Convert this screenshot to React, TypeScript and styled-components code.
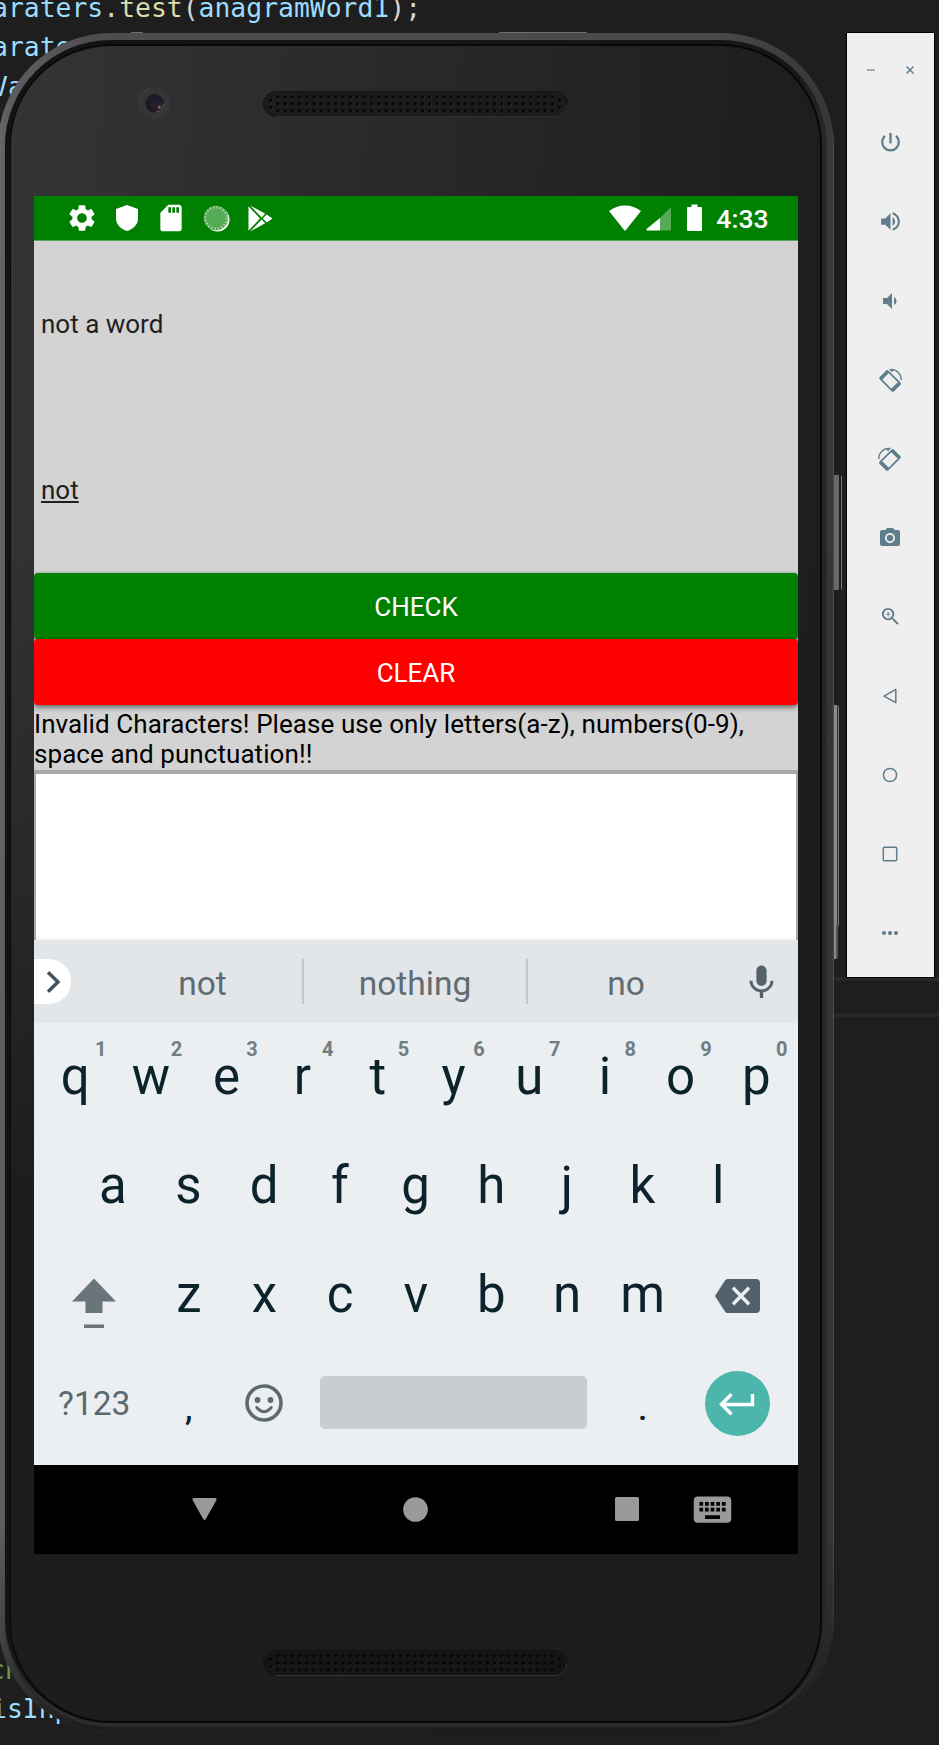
import React from 'react';
import styled, { createGlobalStyle } from 'styled-components';
import {
  MdSettings,
  MdSdCard,
  MdMic,
  MdVolumeUp,
  MdVolumeDown,
  MdPhotoCamera,
  MdZoomIn,
  MdKeyboard,
} from 'react-icons/md';

const GlobalStyle = createGlobalStyle`
  *, *::before, *::after { box-sizing: border-box; }
  html, body { margin: 0; padding: 0; background: #1e1e1e; }
  body { font-family: Roboto, "Liberation Sans", sans-serif; overflow: hidden; }
  svg { display: block; }
`;

const Desktop = styled.main`
  position: relative;
  width: 939px;
  height: 1745px;
  overflow: hidden;
  background: #1e1e1e;
`;

/* ---------- editor behind the emulator ---------- */

const Editor = styled.div`
  display: flex;
  flex-direction: column;
  margin-top: -12.5px;
`;

const CodeLine = styled.div<{ $active?: boolean; $shift?: number }>`
  flex: none;
  height: 39.58px;
  text-indent: ${(p) => p.$shift ?? -8}px;
  white-space: pre;
  font: 26.4px/39.58px "DejaVu Sans Mono", monospace;
  color: #9cdcfe;
  ${(p) => (p.$active ? 'border: 4px solid #282828; border-width: 4px 0;' : '')}
`;

const Fn = styled.span`
  color: #dcdcaa;
`;
const Punct = styled.span`
  color: #d4d4d4;
`;
const Comment = styled.span`
  color: #6a9955;
`;

/* ---------- phone hardware ---------- */

const Hardware = styled.div<{ $x: number; $y: number; $w: number; $h: number; $tone: string }>`
  position: absolute;
  left: ${(p) => p.$x}px;
  top: ${(p) => p.$y}px;
  width: ${(p) => p.$w}px;
  height: ${(p) => p.$h}px;
  background: ${(p) => p.$tone};
  border-radius: 0 2px 2px 0;
`;

const Frame = styled.section`
  position: absolute;
  left: -2px;
  top: 33px;
  width: 836px;
  height: 1699px;
  padding: 7px 7px 5px;
  border-radius: 113px;
  background: linear-gradient(90deg, #6b696b 0, #605e60 1%, #4e4c4e 12%, #4b494b 85%, #3a3738 98%, #3a3738 99.8%, #555 100%);
  &::before {
    content: '';
    position: absolute;
    inset: 0;
    border-radius: inherit;
    background: linear-gradient(180deg, rgba(20, 20, 20, 0) 0, rgba(20, 20, 20, 0.1) 88%, rgba(20, 20, 20, 0.5) 96%, rgba(20, 20, 20, 0.85) 100%);
  }
`;

const Bezel = styled.div`
  position: relative;
  height: 100%;
  padding: 4px 5px 4px 5px;
  border-radius: 106px;
  background: linear-gradient(90deg, #131313 0, #171717 96%, #2a292a 100%);
  box-shadow: inset 0 -4px 0 #2d2c2d;
`;

const Glass = styled.div`
  display: flex;
  flex-direction: column;
  align-items: flex-start;
  height: 100%;
  border: 2px solid #080808;
  border-left-width: 1px;
  border-radius: 101px;
  padding-left: 23px;
  background: linear-gradient(90deg, rgba(28, 28, 29, 0), rgba(28, 28, 29, 0.95)),
    linear-gradient(180deg, #343436 0, #333335 28%, #282829 50%, #1d1d1e 68%, #1d1d1e 100%);
`;

const Forehead = styled.div`
  display: flex;
  align-items: flex-start;
  width: 764px;
  height: 150px;
  padding: 41px 0 0 104px;
`;

const Chin = styled.div`
  display: flex;
  width: 764px;
  padding: 96px 0 0 229px;
`;

const LensSlot = styled.div`
  width: 32px;
  height: 32px;
  margin-right: 93px;
`;

const GrilleSlot = styled.div`
  padding-top: 4px;
`;

function Lens() {
  return (
    <svg width="32" height="32" viewBox="0 0 32 32">
      <circle cx="16" cy="16" r="15.5" fill="#353537" stroke="#3a3a3c" />
      <circle cx="16.5" cy="16.3" r="9.3" fill="#1c1a23" />
      <circle cx="19" cy="18" r="6" fill="#241f2e" />
      <path d="M19 20.500l3-2.500 1 2-2 2z" fill="#8d5a5a" />
      <path d="M18 25a9 9 0 0 0 7.500-8" fill="none" stroke="#5c595c" />
    </svg>
  );
}

function Grille({ dark }: { dark?: boolean }) {
  const dots: React.ReactNode[] = [];
  const hole = (x: number, y: number) => (
    <g key={`${x}-${y}`}>
      <circle cx={x + 0.5} cy={y + 0.6} r="1.9" fill={dark ? '#242425' : '#303032'} />
      <circle cx={x} cy={y} r="1.8" fill="#070707" />
    </g>
  );
  for (let c = 0; c < 39; c++) for (const y of [6, 13, 20]) dots.push(hole(15 + c * 7.22, y));
  for (const x of [7.5, 296.5]) for (const y of [9.5, 16.5]) dots.push(hole(x, y));
  return (
    <svg width="305" height="26" viewBox="0 0 305 26">
      <rect x="0.5" y="0.5" width="304" height="25" rx="12.5" fill={dark ? '#151515' : '#1b1b1b'} stroke="#131313" />
      <path d="M12 25.5H292a12.5 12.5 0 0 0 12-12" fill="none" stroke={dark ? '#383838' : '#303031'} />
      {dots}
    </svg>
  );
}

/* ---------- phone screen ---------- */

const Screen = styled.div`
  display: flex;
  flex-direction: column;
  flex: none;
  width: 764px;
  height: 1358px;
  background: #d3d3d3;
  overflow: hidden;
`;

const StatusBar = styled.header`
  display: flex;
  justify-content: space-between;
  flex: none;
  height: 45px;
  padding: 0 29.5px 0 26px;
  background: #008000;
  border-bottom: 1px solid #55a955;
  color: #fff;
`;

const StatusGroup = styled.div`
  display: flex;
  align-items: center;
`;

const StatusIcon = styled.span`
  display: flex;
  justify-content: center;
  width: 44.6px;
`;

const Clock = styled.time`
  margin-left: 11.5px;
  padding-top: 3px;
  font-size: 26.5px;
  font-weight: 500;
  line-height: 1;
`;

const Field = styled.label<{ $composing?: boolean }>`
  display: flex;
  align-items: center;
  flex: none;
  height: 166px;
  padding-left: 7px;
  font-size: 26px;
  line-height: 30.5px;
  color: #1f1f1f;
  span {
    ${(p) => (p.$composing ? 'text-decoration: underline; text-decoration-thickness: 1.5px; text-underline-offset: 2px;' : '')}
  }
`;

const ActionButton = styled.button<{ $tone: string }>`
  flex: none;
  height: 66px;
  padding: 2px 0 0;
  border: 0;
  border-radius: 4px;
  background: ${(p) => p.$tone};
  box-shadow: 0 3px 5px rgba(0, 0, 0, 0.4), 0 0 3px rgba(0, 0, 0, 0.25);
  color: #fff;
  font: 26px/30px Roboto, sans-serif;
`;

const Message = styled.p`
  flex: none;
  position: relative;
  height: 61px;
  margin: 3.5px 0 0;
  font-size: 26px;
  line-height: 30.3px;
  letter-spacing: 0.065px;
  color: #000;
`;

const Output = styled.div`
  flex: 1;
  border: 2px solid #a9a9a9;
  border-top-width: 4px;
  border-bottom: 0;
  background: linear-gradient(0deg, #f4f4f4 0, #fff 4px);
`;

/* ---------- soft keyboard ---------- */

const Suggestions = styled.div`
  display: grid;
  grid-template-columns: 69px 201px 224px 198px 72px;
  align-items: center;
  flex: none;
  height: 83px;
  background: #e2e6e9;
  color: #5f6c73;
`;

const ExpandTab = styled.div`
  display: flex;
  align-items: center;
  width: 37px;
  height: 45px;
  padding-left: 12px;
  border-radius: 0 22px 22px 0;
  background: #fff;
`;

const Suggestion = styled.div<{ $divided?: boolean }>`
  height: 45px;
  border-right: 2px solid ${(p) => (p.$divided ? '#c3c8cb' : 'transparent')};
  text-align: center;
  font-size: 33.5px;
  line-height: 49px;
`;

const MicCell = styled.div`
  display: flex;
  justify-content: center;
  padding: 1px 2px 0 0;
  color: #54626a;
`;

const Keyboard = styled.div`
  flex: none;
  height: 442px;
  background: #ebeff2;
`;

const KeyRow = styled.div<{ $first?: boolean; $inset?: boolean }>`
  display: flex;
  height: ${(p) => (p.$first ? 106.5 : 109.5)}px;
  padding: 0 ${(p) => (p.$inset ? 42 : 4)}px ${(p) => (p.$first ? 2 : 0)}px ${(p) => (p.$inset ? 41 : 3.5)}px;
`;

const offsets = { letter: 3, mode: 1, punct: 11, shift: 18, backspace: 4, icon: 0 };

const Key = styled.div<{ $span?: number; $kind?: keyof typeof offsets }>`
  position: relative;
  display: flex;
  align-items: center;
  justify-content: center;
  flex: ${(p) => p.$span ?? 1} 1 0;
  padding-top: ${(p) => offsets[p.$kind ?? 'letter']}px;
  padding-bottom: ${(p) => (p.$kind === 'icon' ? 1.5 : 0)}px;
  font-size: ${(p) => (p.$kind ? 33.5 : 51)}px;
  font-weight: ${(p) => (p.$kind === 'punct' ? 500 : 400)};
  line-height: 1.172;
  color: ${(p) => (p.$kind === 'mode' || p.$kind === 'icon' ? '#5c696f' : '#0d232c')};
`;

const Hint = styled.span`
  position: absolute;
  left: 57.5px;
  top: 13.5px;
  font-size: 20px;
  font-weight: 700;
  line-height: 24px;
  color: #727d82;
`;

const SpaceBar = styled.div`
  flex: none;
  width: 267px;
  height: 53px;
  border-radius: 5px;
  background: #c9cdd0;
`;

const EnterKey = styled.div`
  display: flex;
  align-items: center;
  justify-content: center;
  width: 65px;
  height: 65px;
  border-radius: 50%;
  background: #4db6ac;
`;

const NavBar = styled.nav`
  display: grid;
  grid-template-columns: 65px 211px 211px 63px 86px 85px;
  align-items: center;
  justify-items: center;
  flex: none;
  height: 89px;
  padding-bottom: 1px;
  background: #000;
  color: #9a9a9a;
`;

/* ---------- emulator side panel ---------- */

const SidePanel = styled.aside`
  position: absolute;
  left: 846px;
  top: 32px;
  width: 89px;
  height: 946px;
  border: 1px solid #000;
  background: #efefef;
  color: #607d8b;
`;

const WindowControls = styled.div`
  display: flex;
  align-items: center;
  justify-content: space-between;
  height: 70px;
  padding: 4px 20px 0;
`;

const Tool = styled.div`
  display: flex;
  align-items: center;
  justify-content: center;
  height: 79px;
  padding-right: 1px;
`;

function PowerIcon() {
  return (
    <svg width="25" height="25" viewBox="0 0 25 25" fill="none" stroke="currentColor" strokeWidth="2.300">
      <path d="M12.500 3v10.500M7 5.900a8.300 8.300 0 1 0 11 0" />
    </svg>
  );
}

function RotateIcon({ mirrored }: { mirrored?: boolean }) {
  return (
    <svg width="24" height="24" viewBox="0 0 24 24" fill="none" stroke="currentColor" transform={mirrored ? 'scale(-1 1)' : undefined}>
      <g transform="rotate(45 12 12.7)">
        <rect x="3" y="7.4" width="18.4" height="10.800" rx="1" strokeWidth="1.7" />
        <path d="M4.200 7.600v10.400M20.200 7.600v10.400" strokeWidth="3.200" />
      </g>
      <path d="M12.5 1.4A10.300 10.300 0 0 1 23.300 12" strokeWidth="1.4" />
      <path d="M11 .8l5.500.6-2.800 2.9z" fill="currentColor" stroke="none" />
    </svg>
  );
}

const OutlineIcon = ({ children }: { children: React.ReactNode }) => (
  <svg width="24" height="24" viewBox="0 0 24 24" fill="none" stroke="currentColor" strokeWidth="1.5" strokeLinejoin="round">
    {children}
  </svg>
);

const tools: React.ReactNode[] = [
  <PowerIcon />,
  <MdVolumeUp size={25} />,
  <MdVolumeDown size={24} />,
  <RotateIcon />,
  <RotateIcon mirrored />,
  <MdPhotoCamera size={24} />,
  <MdZoomIn size={23} />,
  <OutlineIcon><path d="M17.8 5.3v13.4L6 12.2z" /></OutlineIcon>,
  <OutlineIcon><circle cx="12" cy="12" r="6.6" /></OutlineIcon>,
  <OutlineIcon><rect x="5.3" y="5.3" width="13.4" height="13.4" rx="1" /></OutlineIcon>,
  <svg width="18" height="6" viewBox="0 0 18 6" fill="currentColor">
    <circle cx="3" cy="3" r="2.1" /><circle cx="9" cy="3" r="2.1" /><circle cx="15" cy="3" r="2.1" />
  </svg>,
];

function SpinnerIcon() {
  return (
    <svg width="27" height="27" viewBox="0 0 27 27" fill="none">
      <circle cx="14.5" cy="14.5" r="12" fill="#fff" />
      <circle cx="13" cy="13" r="12.3" fill="#55aa55" />
      <circle cx="13" cy="13" r="10.8" stroke="#a5d2a5" strokeWidth="2.6" strokeDasharray="1.4 2" />
    </svg>
  );
}

function SmileIcon() {
  return (
    <svg width="38" height="38" viewBox="0 0 38 38" fill="none" stroke="currentColor">
      <circle cx="19" cy="19" r="17" strokeWidth="3.600" />
      <path d="M11.800 23.500Q19 32 26.200 23.500" strokeWidth="3" strokeLinecap="round" />
      <circle cx="12.500" cy="16" r="2.900" fill="currentColor" stroke="none" />
      <circle cx="25.500" cy="16" r="2.900" fill="currentColor" stroke="none" />
    </svg>
  );
}

const hints = '1234567890';

export default function App() {
  const blank = (n: number, from: number) => Array.from({ length: n }, (_, i) => <CodeLine key={from + i}> </CodeLine>);
  return (
    <Desktop>
      <GlobalStyle />
      <Editor>
        <CodeLine>
          araters<Punct>.</Punct><Fn>test</Fn><Punct>(</Punct>anagramWord1<Punct>);</Punct>
        </CodeLine>
        <CodeLine>arate</CodeLine>
        <CodeLine>Va</CodeLine>
        {blank(22, 3)}
        <CodeLine $active> </CodeLine>
        {blank(16, 26)}
        <CodeLine $shift={-11}><Comment>ch</Comment></CodeLine>
        <CodeLine $shift={-9}>isInp</CodeLine>
      </Editor>

      <Hardware $x={131} $y={32} $w={12} $h={2} $tone="#6e6e6e" />
      <Hardware $x={499} $y={32} $w={88} $h={2} $tone="#6e6e6e" />
      <Hardware $x={833} $y={475} $w={9} $h={115} $tone="linear-gradient(90deg,#6a676a 0 65%,#1c1c1c 65% 85%,#777 85%)" />
      <Hardware $x={833} $y={705} $w={6} $h={222} $tone="linear-gradient(90deg,#8b888b 0 65%,#333 65% 85%,#777 85%)" />
      <Hardware $x={833} $y={925} $w={5} $h={34} $tone="linear-gradient(90deg,#8b888b 0 65%,#555 65%)" />

      <Frame>
        <Bezel>
          <Glass>
            <Forehead>
              <LensSlot><Lens /></LensSlot>
              <GrilleSlot><Grille /></GrilleSlot>
            </Forehead>

            <Screen>
              <StatusBar>
                <StatusGroup>
                  <StatusIcon><MdSettings size={32} /></StatusIcon>
                  <StatusIcon>
                    <svg width="24" height="28" viewBox="0 0 24 28" fill="currentColor">
                      <path d="M12 1L23 5v9.500c0 6-4.600 10.500-11 12.500C5.600 25 1 20.500 1 14.500V5z" />
                    </svg>
                  </StatusIcon>
                  <StatusIcon><MdSdCard size={32} /></StatusIcon>
                  <StatusIcon><SpinnerIcon /></StatusIcon>
                  <StatusIcon>
                    <svg width="25" height="27" viewBox="0 0 25 27" fill="currentColor">
                      <path d="M.5 1.200L12 13.500.5 25.800zM2.200.4L17.200 8.800 13.600 12.500zM2.200 26.600L17.200 18.200 13.600 14.500zM18.600 9.600L24.500 13.500 18.600 17.400 14.800 13.500z" />
                    </svg>
                  </StatusIcon>
                </StatusGroup>
                <StatusGroup>
                  <svg width="32" height="28" viewBox="0 0 32 28" fill="currentColor">
                    <path d="M0 7C9-.5 23-.5 32 7L16.500 26.500q-.5.500-1 0z" />
                  </svg>
                  <svg width="35" height="28" viewBox="0 0 35 28" fill="currentColor">
                    <path d="M30 3v23.500H19V14z" opacity=".34" />
                    <path d="M19 14v12.500H6q-1-.5-.5-1.500z" />
                  </svg>
                  <svg width="29" height="28" viewBox="0 0 29 28" fill="currentColor">
                    <path d="M15.500.5h6v2.500H25q1 0 1 1v22q0 1-1 1H12q-1 0-1-1V4q0-1 1-1h3.500z" />
                  </svg>
                  <Clock>4:33</Clock>
                </StatusGroup>
              </StatusBar>

              <Field><span>not a word</span></Field>
              <Field $composing><span>not</span></Field>
              <ActionButton $tone="#008000">CHECK</ActionButton>
              <ActionButton $tone="#ff0000">CLEAR</ActionButton>
              <Message>
                Invalid Characters! Please use only letters(a-z), numbers(0-9),<br />space and punctuation!!
              </Message>
              <Output />

              <Suggestions>
                <ExpandTab>
                  <svg width="15" height="24" viewBox="0 0 15 24" fill="none" stroke="#43525a" strokeWidth="3.400">
                    <path d="M2 2.200L12 12 2 21.800" />
                  </svg>
                </ExpandTab>
                <Suggestion $divided>not</Suggestion>
                <Suggestion $divided>nothing</Suggestion>
                <Suggestion>no</Suggestion>
                <MicCell><MdMic size={41} /></MicCell>
              </Suggestions>

              <Keyboard>
                <KeyRow $first>
                  {'qwertyuiop'.split('').map((k, i) => (
                    <Key key={k}>{k}<Hint>{hints[i]}</Hint></Key>
                  ))}
                </KeyRow>
                <KeyRow $inset>
                  {'asdfghjkl'.split('').map((k) => <Key key={k}>{k}</Key>)}
                </KeyRow>
                <KeyRow>
                  <Key $span={1.5} $kind="shift">
                    <svg width="44" height="52" viewBox="0 0 44 52" fill="#69757b">
                      <path d="M22 1.500L44 24.500H30.500V36h-17V24.500H0zM12 47.500h20v3.500H12z" />
                    </svg>
                  </Key>
                  {'zxcvbnm'.split('').map((k) => <Key key={k}>{k}</Key>)}
                  <Key $span={1.5} $kind="backspace">
                    <svg width="45" height="34" viewBox="0 0 45 34">
                      <path d="M12.500 0H41q4 0 4 4v26q0 4-4 4H12.500q-1.500 0-2.500-1.500L0 17 10 1.500Q11 0 12.500 0z" fill="#51606a" />
                      <path d="M18 8.700L34 25.200M34 8.700L18 25.200" stroke="#ebeff2" strokeWidth="3.400" />
                    </svg>
                  </Key>
                </KeyRow>
                <KeyRow>
                  <Key $span={1.5} $kind="mode">?123</Key>
                  <Key $kind="punct">,</Key>
                  <Key $kind="icon"><SmileIcon /></Key>
                  <Key $span={4} $kind="icon"><SpaceBar /></Key>
                  <Key $kind="punct">.</Key>
                  <Key $span={1.5} $kind="mode">
                    <EnterKey>
                      <svg width="36" height="24" viewBox="0 0 36 24" fill="none" stroke="#fff" strokeWidth="3.400">
                        <path d="M33.500 2v10.500H3M12.500 2.300L2.500 12.300 12.500 22.300" />
                      </svg>
                    </EnterKey>
                  </Key>
                </KeyRow>
              </Keyboard>

              <NavBar>
                <span />
                <svg width="25" height="24" viewBox="0 0 25 24" fill="currentColor">
                  <path d="M1.500 1h22q1.500.5 1 2L13.700 22.300q-1.200 1.400-2.400 0L.5 3Q0 1.500 1.500 1z" />
                </svg>
                <svg width="25" height="25" viewBox="0 0 25 25" fill="currentColor"><circle cx="12.500" cy="12.500" r="12.300" /></svg>
                <span />
                <svg width="24" height="24" viewBox="0 0 24 24" fill="currentColor"><rect width="24" height="24" rx="1.500" /></svg>
                <MdKeyboard size={45} />
              </NavBar>
            </Screen>

            <Chin><Grille dark /></Chin>
          </Glass>
        </Bezel>
      </Frame>

      <SidePanel>
        <WindowControls>
          <svg width="8" height="8" viewBox="0 0 8 8"><path d="M0 4h8" stroke="#90a4ae" strokeWidth="1.800" /></svg>
          <svg width="8" height="8" viewBox="0 0 8 8"><path d="M.5.5l7 7M7.500.5l-7 7" stroke="#607d8b" strokeWidth="1.500" /></svg>
        </WindowControls>
        {tools.map((icon, i) => <Tool key={i}>{icon}</Tool>)}
      </SidePanel>
    </Desktop>
  );
}
